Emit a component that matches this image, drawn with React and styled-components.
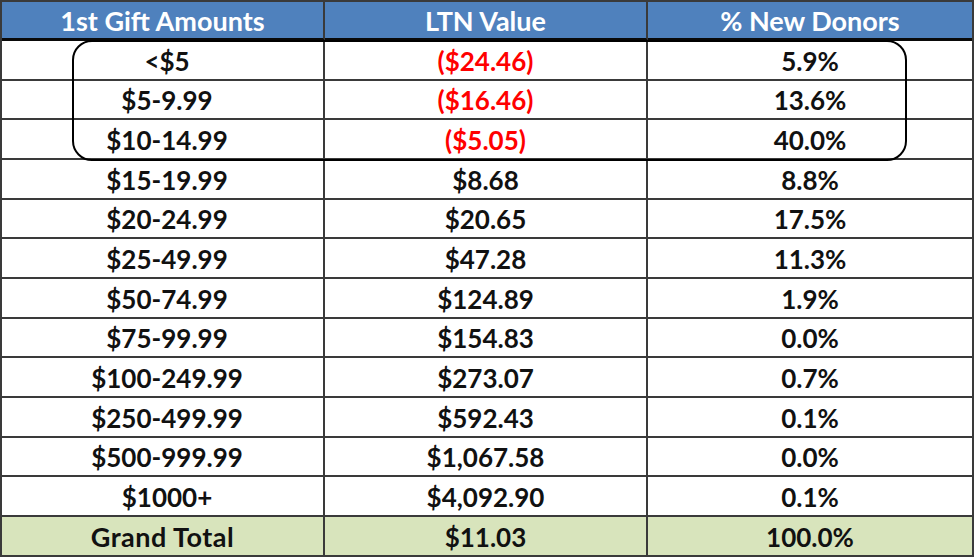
import React from "react";
import styled, { createGlobalStyle } from "styled-components";

const rows = [
  { range: "<$5", value: "($24.46)", share: "5.9%", loss: true },
  { range: "$5-9.99", value: "($16.46)", share: "13.6%", loss: true },
  { range: "$10-14.99", value: "($5.05)", share: "40.0%", loss: true },
  { range: "$15-19.99", value: "$8.68", share: "8.8%" },
  { range: "$20-24.99", value: "$20.65", share: "17.5%" },
  { range: "$25-49.99", value: "$47.28", share: "11.3%" },
  { range: "$50-74.99", value: "$124.89", share: "1.9%" },
  { range: "$75-99.99", value: "$154.83", share: "0.0%" },
  { range: "$100-249.99", value: "$273.07", share: "0.7%" },
  { range: "$250-499.99", value: "$592.43", share: "0.1%" },
  { range: "$500-999.99", value: "$1,067.58", share: "0.0%" },
  { range: "$1000+", value: "$4,092.90", share: "0.1%" },
];

const GlobalStyle = createGlobalStyle`
  body {
    margin: 0;
    background: #ffffff;
    font-family: Lato, "Liberation Sans", sans-serif;
  }
`;

const Frame = styled.div`
  position: relative;
  box-sizing: border-box;
  width: 974px;
  border: 2px solid #3a3a3a;
  display: grid;
  grid-template-columns: 323px 323px 1fr;
  grid-template-rows: 39px repeat(12, 39.67px) 37.67px;
`;

const Cell = styled.div`
  box-sizing: border-box;
  display: flex;
  align-items: center;
  justify-content: center;
  padding-top: 2px;
  padding-left: ${(p) => (p.$indent ? "9px" : "0")};
  font-size: 26px;
  font-weight: 700;
  color: ${(p) => (p.$loss ? "#ff0000" : "#111111")};
  background: ${(p) => (p.$total ? "#d8e4bc" : "#ffffff")};
  border-right: ${(p) => (p.$last ? "none" : "2px solid #3a3a3a")};
  border-bottom: ${(p) => (p.$total ? "none" : "2px solid #3a3a3a")};
`;

const HeadCell = styled(Cell)`
  padding-top: 0;
  font-size: 27px;
  color: #ffffff;
  background: #4f81bd;
  border-bottom: 3px solid #0a0a0a;
`;

const TotalLabel = styled(Cell)`
  font-size: 27px;
  letter-spacing: 0.5px;
`;

const Highlight = styled.div`
  position: absolute;
  left: 70px;
  top: 38px;
  width: 835px;
  height: 121px;
  box-sizing: border-box;
  border: 2px solid #000000;
  border-radius: 20px;
  pointer-events: none;
`;

const App = () => {
  return (
    <>
      <GlobalStyle />
      <Frame>
        <HeadCell>1st Gift Amounts</HeadCell>
        <HeadCell>LTN Value</HeadCell>
        <HeadCell $last>% New Donors</HeadCell>
        {rows.map((r) => (
          <React.Fragment key={r.range}>
            <Cell $indent>{r.range}</Cell>
            <Cell $loss={r.loss}>{r.value}</Cell>
            <Cell $last>{r.share}</Cell>
          </React.Fragment>
        ))}
        <TotalLabel $total>Grand Total</TotalLabel>
        <Cell $total>$11.03</Cell>
        <Cell $total $last>100.0%</Cell>
        <Highlight />
      </Frame>
    </>
  );
};

export default App;
